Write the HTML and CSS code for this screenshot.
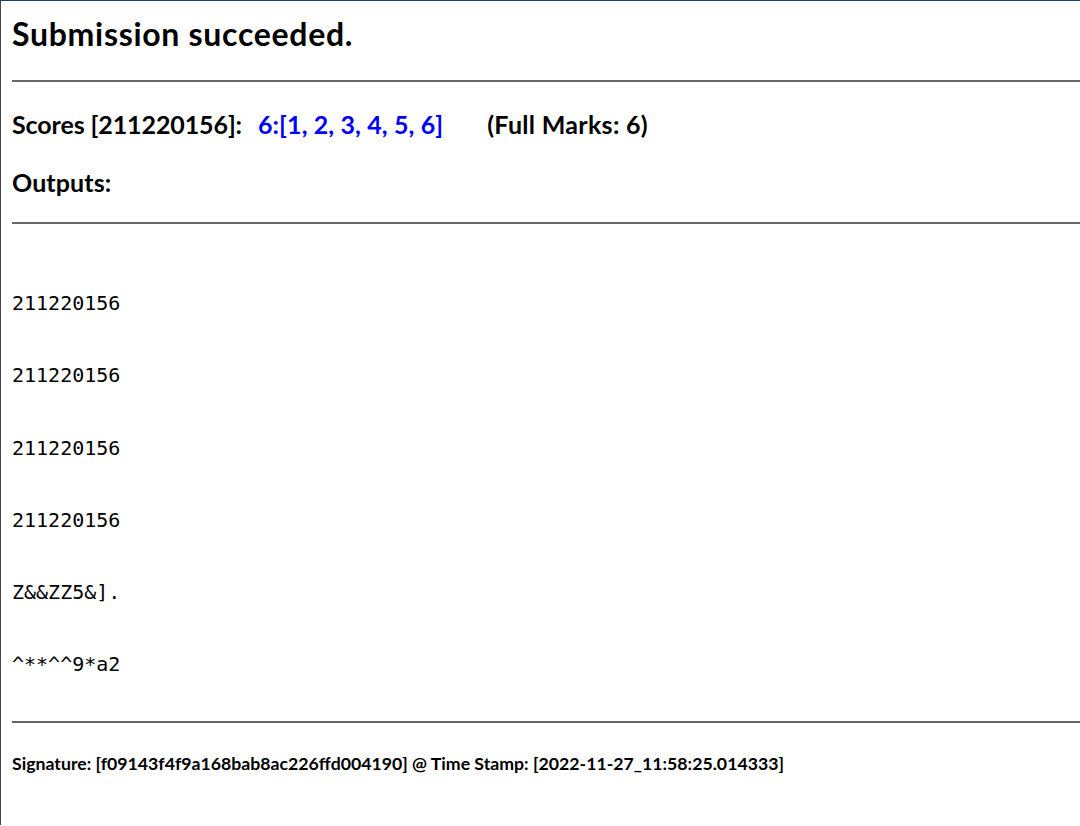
FILE: index.html
```html
<!DOCTYPE html>
<html>
<head>
<meta charset="utf-8">
<title>Submission</title>
<link rel="stylesheet" href="styles.css">
</head>
<body>
<div class="page">
  <h1 class="title">Submission succeeded.</h1>
  <hr class="rule rule-top">
  <h3 class="scores"><span class="label">Scores [211220156]:</span><span class="result">6:[1, 2, 3, 4, 5, 6]</span><span class="full">(Full Marks: 6)</span></h3>
  <h3 class="outputs-title">Outputs:</h3>
  <hr class="rule rule-mid">
  <div class="outputs">
    <div class="line">211220156</div>
    <div class="line">211220156</div>
    <div class="line">211220156</div>
    <div class="line">211220156</div>
    <div class="line">Z&amp;&amp;ZZ5&amp;].</div>
    <div class="line">^**^^9*a2</div>
  </div>
  <hr class="rule rule-bottom">
  <h5 class="signature">Signature: [f09143f4f9a168bab8ac226ffd004190] @ Time Stamp: [2022-11-27_11:58:25.014333]</h5>
</div>
</body>
</html>
```

FILE: styles.css
```css
html, body {
  margin: 0;
  padding: 0;
  background: #ffffff;
}
body {
  border-top: 1px solid #1c3d7a;
  border-left: 1px solid #4d4545;
  min-height: 825px;
  box-sizing: border-box;
  font-family: Lato, "Liberation Sans", sans-serif;
  color: #000;
}
.page {
  padding-left: 11px;
  display: flex;
  flex-direction: column;
}
.title {
  margin: 14px 0 0 0;
  font-size: 32px;
  line-height: 38px;
  letter-spacing: 0.7px;
  font-weight: 700;
}
.rule {
  margin: 0;
  border: none;
  height: 2px;
  background: #666;
}
.rule-top { margin-top: 27px; }
.scores {
  margin: 27px 0 0 0;
  font-size: 25px;
  line-height: 30px;
  font-weight: 700;
  display: flex;
}
.label {
  letter-spacing: -0.1px;
}
.result {
  color: #0000ff;
  margin-left: 16px;
  letter-spacing: 0.1px;
}
.full {
  margin-left: 44px;
  letter-spacing: 0.3px;
}
.outputs-title {
  margin: 28px 0 0 0;
  font-size: 25px;
  line-height: 30px;
  letter-spacing: 0.1px;
  font-weight: 700;
}
.rule-mid { margin-top: 25px; }
.outputs {
  margin-top: 67px;
  display: flex;
  flex-direction: column;
  gap: 48.3px;
  font-family: "DejaVu Sans Mono", monospace;
  font-size: 20px;
  line-height: 24px;
}
.rule-bottom { margin-top: 45px; }
.signature {
  margin: 30px 0 0 0;
  font-size: 17.7px;
  line-height: 22px;
  font-weight: 700;
}
```
